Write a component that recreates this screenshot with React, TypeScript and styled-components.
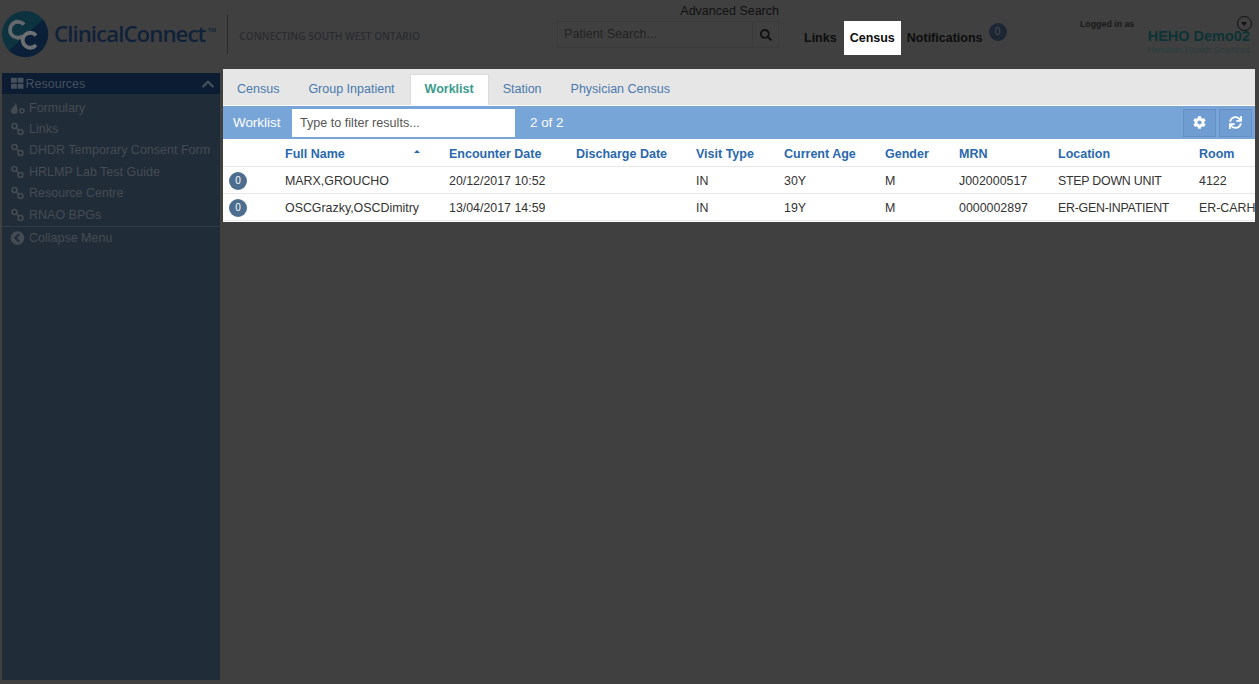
import React from 'react';
import styled, { createGlobalStyle } from 'styled-components';
import { FaChevronCircleLeft, FaChevronUp, FaCog, FaSearch, FaSync, FaThLarge } from 'react-icons/fa';

const GlobalStyle = createGlobalStyle`
  html, body {
    margin: 0;
    height: 100%;
    background: #404040;
    font-family: 'Liberation Sans', Arial, sans-serif;
    overflow: hidden;
  }
`;

const LinkIcon: React.FC = () => (
  <svg width="14" height="14" viewBox="0 0 14 14" fill="none" stroke="currentColor" strokeWidth="1.5">
    <circle cx="4" cy="4" r="2.500" />
    <circle cx="10" cy="10" r="2.500" />
    <path d="M5.800 5.800l2.400 2.400" />
  </svg>
);

const PillIcon: React.FC = () => (
  <svg width="15" height="14" viewBox="0 0 15 14" fill="currentColor">
    <path d="M6 1.500c-.6 2-1.200 2.600-2.500 4.200C2.300 7.100 1 8.400 1 10c0 1.800 1.500 3 3.300 3 2 0 3.400-1.300 3.400-3.200 0-2.800-1.300-5.600-1.700-8.300z" />
    <circle cx="12" cy="9.800" r="2.100" fill="none" stroke="currentColor" strokeWidth="1.400" />
  </svg>
);

const Logo: React.FC = () => (
  <svg width="48" height="48" viewBox="0 0 48 48">
    <circle cx="24" cy="24" r="23" fill="#0d3340" />
    <path d="M42 9.600A23 23 0 0 1 8 40.500z" fill="#0b2038" />
    <path d="M23 14.500a8 8 0 1 0 -1 11.500" fill="none" stroke="#66696c" strokeWidth="3.800" />
    <path d="M35 25.500a7.500 7.500 0 1 0 0 9.500" fill="none" stroke="#6d7073" strokeWidth="3.800" />
  </svg>
);

const Header = styled.header`
  display: flex;
  height: 69px;
  box-sizing: border-box;
  padding-top: 2px;
`;

const Brand = styled.div`
  display: flex;
  align-items: center;
  width: 557px;
  height: 63px;
  flex: none;
  padding-left: 1px;
  box-sizing: border-box;
`;

const BrandName = styled.div`
  font-family: 'Open Sans', sans-serif;
  font-weight: 600;
  font-size: 22.300px;
  letter-spacing: -0.970px;
  color: #10213a;
  margin-left: 5px;
  sup {
    font-size: 6px;
    letter-spacing: 0;
    vertical-align: 10px;
    margin-left: 2px;
  }
`;

const BrandRule = styled.div`
  width: 1px;
  height: 40px;
  background: #2b2b2b;
  margin-left: 11px;
`;

const Tagline = styled.div`
  font-family: 'Open Sans', sans-serif;
  font-weight: 600;
  font-size: 10.100px;
  color: #292c30;
  margin: 4px 0 0 11px;
  white-space: nowrap;
`;

const SearchColumn = styled.div`
  width: 222px;
  flex: none;
  display: flex;
  flex-direction: column;
  align-items: flex-end;
`;

const AdvancedLink = styled.div`
  font-size: 12.500px;
  line-height: 19px;
  color: #111;
`;

const SearchBox = styled.div`
  display: flex;
  width: 100%;
  height: 27px;
  border: 1px solid #3b3b3b;
  box-sizing: border-box;
`;

const SearchText = styled.div`
  flex: 1;
  font-size: 12.600px;
  line-height: 24px;
  padding-left: 6px;
  color: #232323;
  border-right: 1px solid #3b3b3b;
`;

const SearchButton = styled.div`
  width: 25px;
  display: flex;
  align-items: center;
  justify-content: center;
  color: #111;
  font-size: 12px;
`;

const Nav = styled.nav`
  display: flex;
  align-items: flex-start;
  margin-left: 20px;
  padding-top: 19px;
  width: 276px;
  flex: none;
`;

const NavItem = styled.div<{ $active?: boolean }>`
  height: 34px;
  line-height: 34px;
  padding: 0 6px;
  font-size: 12.500px;
  font-weight: 700;
  color: #0d0d0d;
  background: ${({ $active }) => ($active ? '#fff' : 'transparent')};
  box-sizing: border-box;
  white-space: nowrap;
  &:first-child {
    padding: 0 7px 0 5px;
  }
`;

const NavBadge = styled.span`
  width: 18px;
  height: 18px;
  margin: 2px 0 0 0;
  border-radius: 50%;
  background: #1c2733;
  color: #4a5056;
  font-size: 10px;
  line-height: 18px;
  text-align: center;
`;

const Account = styled.div`
  flex: 1;
  padding-right: 9px;
  display: flex;
  flex-direction: column;
  align-items: flex-end;
  position: relative;
`;

const LoggedIn = styled.div`
  align-self: flex-start;
  margin-left: 5px;
  padding-top: 17px;
  font-size: 8.800px;
  line-height: 10px;
  font-weight: 700;
  color: #191919;
`;

const AccountToggle = styled.span`
  position: absolute;
  top: 14px;
  right: 7px;
  width: 13px;
  height: 13px;
  border: 1px solid #111;
  border-radius: 50%;
  &::after {
    content: '';
    position: absolute;
    left: 3px;
    top: 5px;
    border: 3.500px solid transparent;
    border-top: 4px solid #111;
    border-bottom: 0;
  }
`;

const AccountName = styled.div`
  font-size: 14.500px;
  font-weight: 700;
  line-height: 17px;
  color: #0e3336;
  margin-top: -1px;
`;

const AccountOrg = styled.div`
  font-size: 9px;
  line-height: 12px;
  margin-top: -1px;
  color: #2b3c3f;
`;

const Body = styled.div`
  display: flex;
  align-items: flex-start;
  padding-left: 2px;
`;

const Sidebar = styled.aside`
  width: 218px;
  height: 607px;
  margin-top: 4px;
  flex: none;
  background: #212c39;
  color: #454b52;
  font-size: 12.500px;
`;

const SidebarTitle = styled.div`
  height: 21px;
  display: flex;
  align-items: center;
  padding: 0 5px 0 9px;
  background: #0b1c33;
  color: #46505c;
  font-size: 12.500px;
  gap: 2px;
  svg:last-child {
    margin-left: auto;
    font-size: 14px;
  }
`;

const SidebarList = styled.div`
  padding: 3px 0 1px;
  border-bottom: 1px solid #313c49;
`;

const SidebarItem = styled.div`
  height: 21.400px;
  display: flex;
  align-items: center;
  gap: 4px;
  padding-left: 8px;
  white-space: nowrap;
  svg {
    flex: none;
    width: 15px;
  }
`;

const CollapseItem = styled(SidebarItem)`
  height: 21px;
  svg {
    font-size: 14px;
  }
`;

const Main = styled.main`
  width: 1032px;
  margin-left: 3px;
  background: #fff;
  flex: none;
  overflow: hidden;
  height: 153px;
`;

const TabBar = styled.div`
  display: flex;
  height: 36px;
  padding-top: 5px;
  box-sizing: border-box;
  background: #e6e6e6;
`;

const Tab = styled.div<{ $active?: boolean }>`
  padding: 0 14px 0 ${({ $active }) => ($active ? '14px' : '13px')};
  line-height: 29px;
  font-size: 12.500px;
  color: ${({ $active }) => ($active ? '#3b9b8c' : '#4a79ac')};
  font-weight: ${({ $active }) => ($active ? 700 : 400)};
  background: ${({ $active }) => ($active ? '#fff' : 'transparent')};
  border: 1px solid ${({ $active }) => ($active ? '#dcdcdc' : 'transparent')};
  border-bottom: 0;
  box-sizing: border-box;
  height: 31px;
`;

const Toolbar = styled.div`
  display: flex;
  align-items: center;
  height: 33px;
  margin: 1px 0;
  background: #78a5d8;
  color: #fff;
  font-size: 13.400px;
`;

const ToolbarTitle = styled.div`
  width: 69px;
  padding-left: 10px;
  box-sizing: border-box;
  flex: none;
`;

const FilterBox = styled.div`
  width: 223px;
  height: 28px;
  line-height: 28px;
  padding-left: 8px;
  box-sizing: border-box;
  background: #fff;
  color: #555;
  font-size: 12.600px;
`;

const Count = styled.div`
  margin-left: 15px;
  flex: 1;
`;

const ToolButton = styled.div`
  width: 33px;
  height: 28px;
  margin-right: 3px;
  display: flex;
  align-items: center;
  justify-content: center;
  background: #6f9dd2;
  border: 1px solid #6690c2;
  box-sizing: border-box;
  color: #fff;
  font-size: 13px;
`;

const Row = styled.div<{ $head?: boolean }>`
  display: grid;
  grid-template-columns: 62px 164px 127px 120px 88px 101px 74px 99px 141px 100px;
  align-items: center;
  height: 27px;
  padding-top: 1px;
  font-size: ${({ $head }) => ($head ? '12.500px' : '12.400px')};
  color: ${({ $head }) => ($head ? '#2a68ae' : '#333')};
  font-weight: ${({ $head }) => ($head ? 700 : 400)};
  border-bottom: 1px solid #e8e8e8;
  box-sizing: border-box;
  white-space: nowrap;
`;

const Cell = styled.div`
  overflow: hidden;
`;

const LocationCell = styled(Cell)`
  letter-spacing: -0.250px;
`;

const SortCell = styled(Cell)`
  position: relative;
  overflow: visible;
  &::after {
    content: '';
    position: absolute;
    right: 29px;
    top: 3px;
    border: 3px solid transparent;
    border-bottom: 3px solid #2a68ae;
    border-top: 0;
  }
`;

const CountBadge = styled.span`
  display: block;
  width: 18px;
  height: 18px;
  margin-left: 6px;
  border-radius: 50%;
  background: #4d6e8f;
  color: #fff;
  font-size: 10px;
  line-height: 18px;
  text-align: center;
`;

const columns = ['Encounter Date', 'Discharge Date', 'Visit Type', 'Current Age', 'Gender', 'MRN', 'Location', 'Room'];

const patients = [
  { name: 'MARX,GROUCHO', encounter: '20/12/2017 10:52', age: '30Y', mrn: 'J002000517', location: 'STEP DOWN UNIT', room: '4122' },
  { name: 'OSCGrazky,OSCDimitry', encounter: '13/04/2017 14:59', age: '19Y', mrn: '0000002897', location: 'ER-GEN-INPATIENT', room: 'ER-CARH' },
];

const resources = ['Links', 'DHDR Temporary Consent Form', 'HRLMP Lab Test Guide', 'Resource Centre', 'RNAO BPGs'];

const tabs = ['Census', 'Group Inpatient', 'Worklist', 'Station', 'Physician Census'];

const App: React.FC = () => (
  <>
    <GlobalStyle />
    <Header>
      <Brand>
        <Logo />
        <BrandName>
          ClinicalConnect<sup>TM</sup>
        </BrandName>
        <BrandRule />
        <Tagline>CONNECTING SOUTH WEST ONTARIO</Tagline>
      </Brand>
      <SearchColumn>
        <AdvancedLink>Advanced Search</AdvancedLink>
        <SearchBox>
          <SearchText>Patient Search...</SearchText>
          <SearchButton>
            <FaSearch />
          </SearchButton>
        </SearchBox>
      </SearchColumn>
      <Nav>
        <NavItem>Links</NavItem>
        <NavItem $active>Census</NavItem>
        <NavItem>Notifications</NavItem>
        <NavBadge>0</NavBadge>
      </Nav>
      <Account>
        <LoggedIn>Logged in as</LoggedIn>
        <AccountToggle />
        <AccountName>HEHO Demo02</AccountName>
        <AccountOrg>Hamilton Health Sciences</AccountOrg>
      </Account>
    </Header>
    <Body>
      <Sidebar>
        <SidebarTitle>
          <FaThLarge />
          Resources
          <FaChevronUp />
        </SidebarTitle>
        <SidebarList>
          <SidebarItem>
            <PillIcon />
            Formulary
          </SidebarItem>
          {resources.map((name) => (
            <SidebarItem key={name}>
              <LinkIcon />
              {name}
            </SidebarItem>
          ))}
        </SidebarList>
        <CollapseItem>
          <FaChevronCircleLeft />
          Collapse Menu
        </CollapseItem>
      </Sidebar>
      <Main>
        <TabBar>
          {tabs.map((tab) => (
            <Tab key={tab} $active={tab === 'Worklist'}>
              {tab}
            </Tab>
          ))}
        </TabBar>
        <Toolbar>
          <ToolbarTitle>Worklist</ToolbarTitle>
          <FilterBox>Type to filter results...</FilterBox>
          <Count>2 of 2</Count>
          <ToolButton>
            <FaCog />
          </ToolButton>
          <ToolButton>
            <FaSync />
          </ToolButton>
        </Toolbar>
        <Row $head>
          <Cell />
          <SortCell>Full Name</SortCell>
          {columns.map((col) => (
            <Cell key={col}>{col}</Cell>
          ))}
        </Row>
        {patients.map((p) => (
          <Row key={p.name}>
            <Cell>
              <CountBadge>0</CountBadge>
            </Cell>
            <Cell>{p.name}</Cell>
            <Cell>{p.encounter}</Cell>
            <Cell />
            <Cell>IN</Cell>
            <Cell>{p.age}</Cell>
            <Cell>M</Cell>
            <Cell>{p.mrn}</Cell>
            <LocationCell>{p.location}</LocationCell>
            <Cell>{p.room}</Cell>
          </Row>
        ))}
      </Main>
    </Body>
  </>
);

export default App;
